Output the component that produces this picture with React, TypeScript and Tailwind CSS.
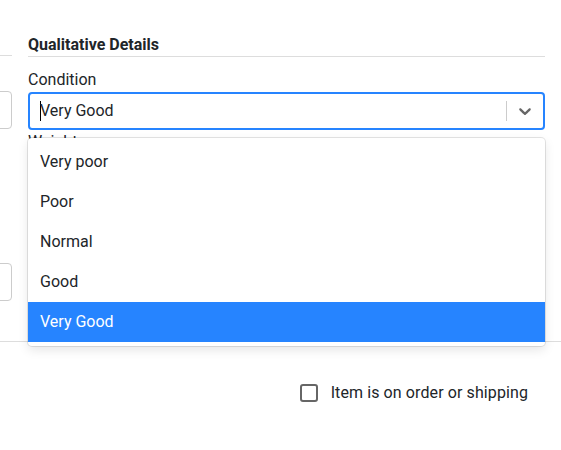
import React from 'react';

const OPTIONS = ['Very poor', 'Poor', 'Normal', 'Good', 'Very Good'];

function Chevron() {
  return (
    <svg width="20" height="20" viewBox="0 0 20 20" fill="currentColor" aria-hidden="true">
      <path d="M4.516 7.548c0.436-0.446 1.043-0.481 1.576 0l3.908 3.747 3.908-3.747c0.533-0.481 1.141-0.446 1.574 0 0.436 0.445 0.408 1.197 0 1.615-0.406 0.418-4.695 4.502-4.695 4.502-0.217 0.223-0.502 0.335-0.787 0.335s-0.57-0.112-0.789-0.335c0 0-4.287-4.084-4.695-4.502s-0.436-1.17 0-1.615z" />
    </svg>
  );
}

export default function App() {
  const selected = 'Very Good';

  return (
    <div className="w-[561px] h-[450px] bg-white text-[#212529] font-['Roboto',sans-serif] overflow-hidden">
      <div className="flex gap-4">
        {/* left column, mostly off screen */}
        <div className="w-3 shrink-0 pt-[34px]">
          <div className="h-[22px] border-b border-[#dddddd]" />
          <div className="mt-[35px] h-[38px] -ml-8 border border-[#cccccc] rounded" />
          <div className="mt-[134px] h-[38px] -ml-8 border border-[#cccccc] rounded" />
        </div>

        {/* right column */}
        <div className="w-[517px] shrink-0 pt-[34px]">
          <div className="h-[22px] text-base leading-[22px] font-bold border-b border-[#dddddd] box-content">
            Qualitative Details
          </div>

          <div className="relative mt-[11px]">
            <label className="block text-base leading-6">Condition</label>
            <div className="flex items-center h-[38px] border-2 border-[#2684FF] rounded bg-white">
              <div className="flex-1 flex items-center pl-[10px]">
                <span className="w-px h-5 bg-black -mr-px" />
                <span className="text-base leading-6">{selected}</span>
              </div>
              <span className="w-px h-5 bg-[#cccccc]" />
              <div className="p-2 text-[#666666]">
                <Chevron />
              </div>
            </div>

            <div className="absolute left-0 right-0 top-[70px] z-10 bg-white rounded py-1 shadow-[0_0_0_1px_rgba(0,0,0,0.1),0_4px_11px_rgba(0,0,0,0.1)]">
              {OPTIONS.map((opt) => (
                <div
                  key={opt}
                  className={`px-3 py-2 text-base leading-6 ${
                    opt === selected ? 'bg-[#2684FF] text-white' : 'text-[#212529]'
                  }`}
                >
                  {opt}
                </div>
              ))}
            </div>
          </div>

          <div>
            <label className="block text-base leading-6 mb-px">Weight</label>
            <div className="h-[38px] border border-[#cccccc] rounded" />
          </div>
        </div>
      </div>

      <div className="mt-[40px] border-t border-[#dddddd]" />

      <div className="mt-[39px] flex items-center justify-end gap-[13px] pr-[33px] h-6">
        <span className="w-[18px] h-[18px] border-2 border-[#666666] rounded-[3px]" />
        <span className="text-base leading-6 tracking-[0.1px]">Item is on order or shipping</span>
      </div>
    </div>
  );
}
